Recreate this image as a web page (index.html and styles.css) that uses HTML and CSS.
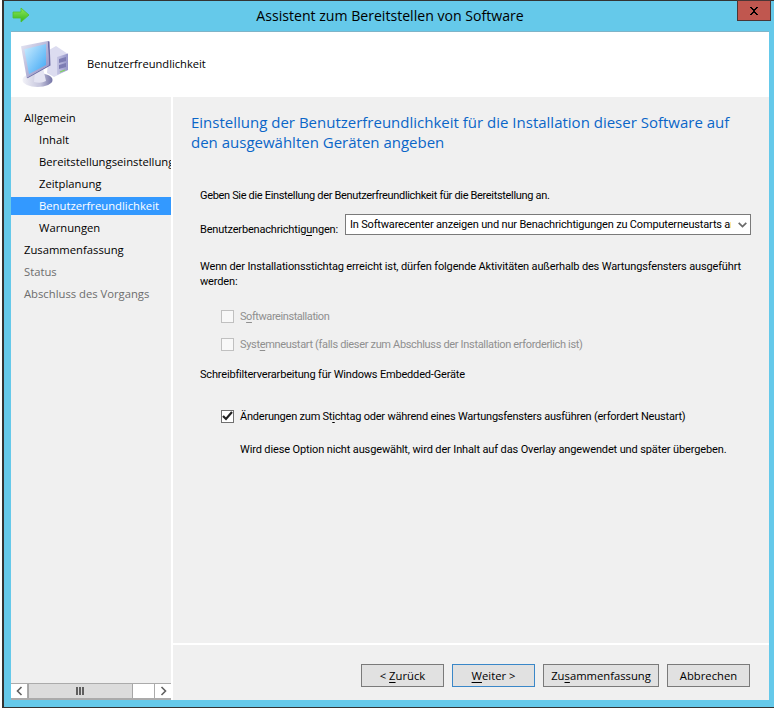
FILE: index.html
```html
<!DOCTYPE html>
<html lang="de">
<head>
<meta charset="utf-8">
<title>Assistent zum Bereitstellen von Software</title>
<link rel="stylesheet" href="styles.css">
</head>
<body>
<div class="window">
  <div class="titlebar">
    <svg class="arrow" width="18" height="16" viewBox="0 0 18 16">
      <defs><linearGradient id="ga" x1="0" y1="0" x2="0" y2="1"><stop offset="0" stop-color="#8fe85a"/><stop offset="1" stop-color="#33b61e"/></linearGradient></defs>
      <path d="M1 5h8V1l8 7-8 7v-4H1z" fill="url(#ga)" stroke="#4fc02f" stroke-width=".8"/>
    </svg>
    <div class="title">Assistent zum Bereitstellen von Software</div>
    <div class="close"><svg width="10" height="8" viewBox="0 0 10 8"><path d="M1 0h2v1h1v1h2V1h1V0h2v1H8v1H7v1H6v2h1v1h1v1h1v1H7V7H6V6H4v1H3v1H1V7h1V6h1V5h1V3H3V2H2V1H1z" fill="#000"/></svg></div>
  </div>
  <div class="client">
    <header class="banner">
      <svg class="pc" width="50" height="50" viewBox="0 0 50 50">
        <defs>
          <linearGradient id="gs" x1="0" y1="0" x2="1" y2="1"><stop offset="0" stop-color="#cdeeff"/><stop offset="1" stop-color="#3da6f4"/></linearGradient>
          <linearGradient id="gb" x1="0" y1="0" x2="1" y2="0"><stop offset="0" stop-color="#f2f2f8"/><stop offset=".6" stop-color="#c4c4dc"/><stop offset="1" stop-color="#7474a6"/></linearGradient>
          <linearGradient id="gt" x1="0" y1="0" x2="1" y2="0"><stop offset="0" stop-color="#c6c6e4"/><stop offset="1" stop-color="#9494c8"/></linearGradient>
          <linearGradient id="gf" x1="0" y1="0" x2="1" y2="1"><stop offset="0" stop-color="#e8e8f4"/><stop offset="1" stop-color="#8a8ac0"/></linearGradient>
        </defs>
        <path d="M29 11l7-4 12 8v16l-14 7-7-4z" fill="#dcdcf0"/>
        <path d="M37 18l11-3.500V31l-11 5z" fill="url(#gt)"/>
        <path d="M39 20l7-2v4l-7 2zM39 26l7-2v4l-7 2z" fill="#7d7db4"/>
        <path d="M40 33l5-2" stroke="#7fd85a" stroke-width="1.200"/>
        <ellipse cx="17.500" cy="41" rx="15" ry="7" fill="url(#gb)"/>
        <path d="M15 32l8-3 3 13q-5 3-12 1z" fill="#e4e4f2"/>
        <path d="M1 7.300L27.700 2 29 26 6.700 38.700z" fill="url(#gf)"/>
        <path d="M27.700 2l1.800.5 1 24-23 12.700-.8-.5L29 26z" fill="#6c6ca6"/>
        <path d="M4.300 10.300L26 5v21L9 35z" fill="url(#gs)"/>
      </svg>
      <span>Benutzerfreundlichkeit</span>
    </header>
    <div class="main">
      <nav class="sidebar">
        <ul class="steps">
          <li class="step">Allgemein</li>
          <li class="step sub">Inhalt</li>
          <li class="step sub">Bereitstellungseinstellungen</li>
          <li class="step sub">Zeitplanung</li>
          <li class="step sub current">Benutzerfreundlichkeit</li>
          <li class="step sub">Warnungen</li>
          <li class="step">Zusammenfassung</li>
          <li class="step off">Status</li>
          <li class="step off">Abschluss des Vorgangs</li>
        </ul>
        <div class="hscroll">
          <div class="sbtn"><svg width="7" height="10" viewBox="0 0 7 10"><path d="M5.500 1L1.500 5l4 4" fill="none" stroke="#606060" stroke-width="1.600"/></svg></div>
          <div class="thumb"><svg width="9" height="8" viewBox="0 0 9 8"><path d="M0 0h2v8H0zM3 0h2v8H3zM6 0h2v8H6z" fill="#606060"/></svg></div>
          <div class="track"></div>
          <div class="sbtn"><svg width="7" height="10" viewBox="0 0 7 10"><path d="M1.500 1l4 4-4 4" fill="none" stroke="#606060" stroke-width="1.600"/></svg></div>
        </div>
      </nav>
      <div class="pane">
        <section class="content">
          <h1 class="heading">Einstellung der Benutzerfreundlichkeit für die Installation dieser Software auf<br>den ausgewählten Geräten angeben</h1>
          <p class="intro">Geben Sie die Einstellung der Benutzerfreundlichkeit für die Bereitstellung an.</p>
          <div class="field">
            <label class="field-label">Benutzerbenachrichtig<u>u</u>ngen:</label>
            <div class="select"><span class="select-text">In Softwarecenter anzeigen und nur Benachrichtigungen zu Computerneustarts anzeigen</span>
              <svg width="9" height="6" viewBox="0 0 9 6"><path d="M.7 .8l3.800 3.800L8.300 .8" fill="none" stroke="#6a6a6a" stroke-width="1.700"/></svg>
            </div>
          </div>
          <p class="para">Wenn der Installationsstichtag erreicht ist, dürfen folgende Aktivitäten außerhalb des Wartungsfensters ausgeführt<br>werden:</p>
          <div class="check disabled first"><span class="box"></span><span>S<u>o</u>ftwareinstallation</span></div>
          <div class="check disabled second"><span class="box"></span><span>Syst<u>e</u>mneustart (falls dieser zum Abschluss der Installation erforderlich ist)</span></div>
          <p class="wf">Schreibfilterverarbeitung für Windows Embedded-Geräte</p>
          <div class="check active"><span class="box"><svg width="11" height="10" viewBox="0 0 11 10"><path d="M1 5l3 3 6-7" fill="none" stroke="#222" stroke-width="2.200"/></svg></span><span>Änderungen zum St<u>i</u>chtag oder während eines Wartungsfensters ausführen (erfordert Neustart)</span></div>
          <p class="note">Wird diese Option nicht ausgewählt, wird der Inhalt auf das Overlay angewendet und später übergeben.</p>
        </section>
        <footer class="actions">
          <button class="btn">&lt; <u>Z</u>urück</button>
          <button class="btn primary"><u>W</u>eiter &gt;</button>
          <button class="btn wide">Zu<u>s</u>ammenfassung</button>
          <button class="btn">Abbrechen</button>
        </footer>
      </div>
    </div>
  </div>
</div>
</body>
</html>
```
FILE: styles.css
```css
* { box-sizing: border-box; }
html, body { margin: 0; padding: 0; }
body { width: 774px; height: 708px; overflow: hidden; background: #fff; font-family: "Open Sans", "Noto Sans", sans-serif; font-size: 11.25px; color: #000; }
u { text-decoration-thickness: 1px; text-underline-offset: 2px; }
.window { margin-left: 2px; width: 772px; height: 708px; background: #65c9ea; border-left: 2px solid #333; border-top: 1px solid #333; border-bottom: 1px solid #333; display: flex; flex-direction: column; padding: 0 5px 7px 7px; }
.titlebar { height: 30px; display: flex; align-items: flex-start; flex: none; }
.arrow { margin: 6px 0 0 1px; flex: none; }
.title { flex: 1; text-align: center; font-size: 14.1px; line-height: 29px; padding-left: 13px; color: #000; }
.close { width: 34px; height: 21px; margin: -1px -2px 0 0; flex: none; background: #c0574f; border: 1px solid #4a3636; display: flex; align-items: center; justify-content: center; }
.client { flex: 1; min-height: 0; display: flex; flex-direction: column; border-top: 1px solid #7fb4c8; }
.banner { height: 65px; flex: none; background: #fff; display: flex; align-items: center; padding: 0 0 2px 9px; font-size: 11.15px; }
.pc { margin-right: 17px; flex: none; }
.main { flex: 1; min-height: 0; display: flex; background: #fff; }
.sidebar { width: 160px; flex: none; background: #f0f0f0; display: flex; flex-direction: column; overflow: hidden; }
.steps { list-style: none; margin: 0; padding: 12px 0 0; flex: 1; }
.step { height: 18px; line-height: 18px; margin-bottom: 4px; padding-left: 13px; white-space: nowrap; overflow: hidden; }
.sub { padding-left: 28px; }
.current { background: #3399ff; color: #fff; }
.off { color: #6d6d6d; }
.hscroll { height: 17px; flex: none; display: flex; border: 1px solid #ababab; border-width: 1px 0 2px; background: #fff; }
.sbtn { width: 17px; flex: none; display: flex; align-items: center; justify-content: center; background: #fff; border-right: 1px solid #ababab; }
.sbtn:last-child { border-right: 0; border-left: 1px solid #ababab; margin-left: -1px; }
.thumb { width: 105px; flex: none; background: #dcdcdc; border: 1px solid #a6a6a6; border-width: 0 1px; display: flex; align-items: center; justify-content: center; }
.track { flex: 1; background: #fff; }
.pane { flex: 1; margin-left: 2px; min-width: 0; background: #f0f0f0; display: flex; flex-direction: column; }
.content { height: 548px; flex: none; padding: 15px 0 0 18px; border-bottom: 2px solid #fff; white-space: nowrap; font-family: Roboto, "Liberation Sans", sans-serif; font-size: 11px; letter-spacing: -0.18px; }
.heading { margin: 0; font-family: "Open Sans", sans-serif; font-size: 15px; line-height: 20px; font-weight: 400; letter-spacing: 0; color: #0a66c8; }
p { margin: 0; }
.intro { margin: 36px 0 0 9px; line-height: 15px; letter-spacing: -0.33px; }
.field { display: flex; align-items: flex-end; margin: 11px 0 0 9px; height: 21px; }
.field-label { width: 145px; flex: none; line-height: 15px; margin-bottom: -2px; }
.select { width: 406px; height: 21px; flex: none; background: #fff; border: 1px solid #7a7a7a; display: flex; align-items: center; justify-content: space-between; padding: 0 3px 0 4px; }
.select-text { width: 381px; overflow: hidden; white-space: nowrap; }
.para { margin: 24px 0 0 9px; line-height: 15px; letter-spacing: -0.15px; }
.check { display: flex; align-items: center; height: 14px; margin-left: 30px; }
.box { width: 13px; height: 13px; margin-right: 6px; flex: none; background: #fff; border: 1px solid #707070; display: flex; align-items: center; justify-content: center; }
.disabled { color: #8f8f8f; }
.disabled .box { border-color: #c0c0c0; background: #f8f8f8; }
.first { margin-top: 20px; letter-spacing: -0.43px; }
.second { margin-top: 14px; letter-spacing: -0.33px; }
.wf { margin: 16px 0 0 9px; line-height: 15px; }
.active { margin-top: 27px; letter-spacing: -0.22px; }
.note { margin: 19px 0 0 49px; line-height: 15px; letter-spacing: -0.13px; }
.actions { flex: 1; display: flex; justify-content: flex-end; gap: 8px; padding: 19px 19px 0 0; }
.btn { width: 83px; height: 23px; padding: 0; background: #e1e1e1; border: 1px solid #7a7a7a; font: inherit; color: #000; }
.wide { width: 116px; }
.primary { border-color: #3a87c8; }
```
